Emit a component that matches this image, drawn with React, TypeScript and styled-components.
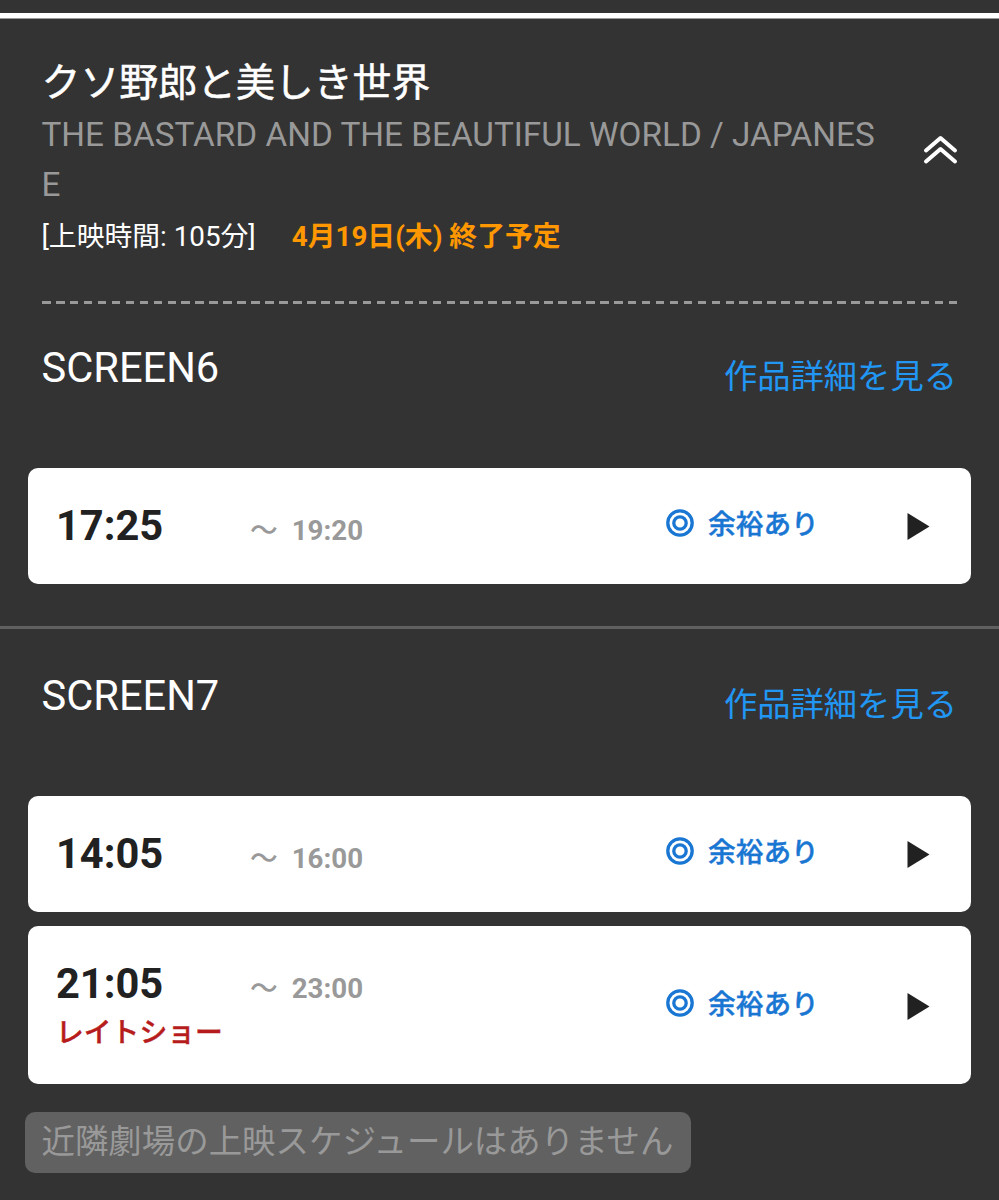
import React from "react";
import styled, { createGlobalStyle } from "styled-components";

const Global = createGlobalStyle`
  * { box-sizing: border-box; }
  body { margin: 0; background: #333; font-family: Roboto, "Noto Sans CJK JP", sans-serif; }
`;

const Page = styled.main`
  height: 1200px;
  overflow: hidden;
  background: #333;
  color: #fff;
`;
const TopRule = styled.div`
  height: 19px;
  border-top: 13px solid #333;
  border-bottom: 1px solid #999;
  background: #fff;
`;
const Header = styled.header`
  display: flex;
  margin: 0 41px;
  height: 285px;
  padding-top: 39px;
  background: repeating-linear-gradient(90deg, #999 0 8.6px, transparent 8.6px 13.95px) 0.5px 282px / 100% 3px no-repeat;
`;
const Info = styled.div`
  width: 860px;
  padding-left: 0.5px;
`;
const Title = styled.h1`
  margin: 0;
  font-size: 38.9px;
  font-weight: 400;
  -webkit-text-stroke: 0.5px currentColor;
  line-height: 50px;
  white-space: nowrap;
`;
const Subtitle = styled.div`
  width: 842px;
  padding-top: 2px;
  font-size: 33.3px;
  line-height: 50px;
  color: #999;
  word-break: break-all;
`;
const Meta = styled.div`
  display: flex;
  gap: 36px;
  padding-top: 2px;
  font-size: 27.8px;
  line-height: 50px;
  white-space: nowrap;
`;
const EndDate = styled.strong`
  color: #ff9800;
  font-weight: 700;
`;
const Collapse = styled.svg`
  flex: none;
  margin: 77px 0 0 22px;
`;
const Section = styled.section<{ $divided?: boolean }>`
  padding: ${(p) => (p.$divided ? "39px 28px 0" : "36px 28px 42px")};
  border-top: ${(p) => (p.$divided ? "3px solid #606060" : "none")};
`;
const SectionHead = styled.div`
  display: flex;
  justify-content: space-between;
  height: 128px;
  padding: 0 14px 0 13.5px;
`;
const Screen = styled.h2`
  margin: 0;
  font-size: 41.6px;
  font-weight: 400;
  line-height: 56px;
`;
const Detail = styled.a`
  padding-top: 9px;
  font-size: 33.3px;
  line-height: 56px;
  color: #2196f3;
`;
const Row = styled.div<{ $tall?: boolean }>`
  display: flex;
  height: ${(p) => (p.$tall ? 158 : 116)}px;
  margin-bottom: 14px;
  padding: 28px 41px 0 28px;
  border-radius: 10px;
  background: #fff;
  color: #212121;
  font-weight: 700;
  white-space: nowrap;
  &:last-child { margin-bottom: 0; }
`;
const Start = styled.div`
  width: 194px;
  font-size: 41.6px;
  line-height: 60px;
`;
const Late = styled.div`
  margin-top: -2px;
  font-size: 27.8px;
  font-weight: 500;
  -webkit-text-stroke: 0.4px currentColor;
  line-height: 42px;
  color: #b71c1c;
`;
const End = styled.div`
  display: flex;
  gap: 14px;
  width: 416px;
  padding-top: 5px;
  font-size: 27.7px;
  line-height: 60px;
  color: #999;
`;
const Tilde = styled.span`
  font-weight: 500;
`;
const Status = styled.div<{ $tall?: boolean }>`
  display: flex;
  gap: 14px;
  width: 241px;
  padding-top: ${(p) => (p.$tall ? 23 : 1)}px;
  font-size: 27.7px;
  font-weight: 500;
  line-height: 55px;
  color: #1976d2;
  svg { margin-top: 12px; }
  span { -webkit-text-stroke: 0.4px currentColor; }
`;
const Play = styled.svg<{ $tall?: boolean }>`
  margin-top: ${(p) => (p.$tall ? 39 : 17)}px;
  flex: none;
`;
const Notice = styled.div`
  width: 666px;
  height: 61px;
  margin: 28px 0 0 25px;
  padding-left: 16.5px;
  border-radius: 10px;
  background: #616161;
  color: #999;
  font-size: 33.45px;
  line-height: 60px;
  white-space: nowrap;
`;

type Show = { start: string; end: string; late?: boolean };

function ShowRow({ start, end, late }: Show) {
  return (
    <Row $tall={late}>
      <Start>
        {start}
        {late && <Late>レイトショー</Late>}
      </Start>
      <End><Tilde>〜</Tilde><span>{end}</span></End>
      <Status $tall={late}>
        <svg width="28" height="28" viewBox="0 0 28 28" fill="none" stroke="currentColor" strokeWidth="3.3">
          <circle cx="14" cy="14" r="12.2" />
          <circle cx="14" cy="14" r="6.2" />
        </svg>
        <span>余裕あり</span>
      </Status>
      <Play $tall={late} width="23" height="27" viewBox="0 0 23 27"><path d="M0.5 0L22.5 13.5L0.5 27Z" fill="#212121" /></Play>
    </Row>
  );
}

function ScreenSection({ name, shows, divided }: { name: string; shows: Show[]; divided?: boolean }) {
  return (
    <Section $divided={divided}>
      <SectionHead><Screen>{name}</Screen><Detail>作品詳細を見る</Detail></SectionHead>
      {shows.map((s) => <ShowRow key={s.start} {...s} />)}
    </Section>
  );
}

export default function App() {
  return (
    <Page>
      <Global />
      <TopRule />
      <Header>
        <Info>
          <Title>クソ野郎と美しき世界</Title>
          <Subtitle>THE BASTARD AND THE BEAUTIFUL WORLD / JAPANESE</Subtitle>
          <Meta><span>[上映時間: 105分]</span><EndDate>4月19日(木) 終了予定</EndDate></Meta>
        </Info>
        <Collapse width="35" height="30" viewBox="0 0 35 30" fill="none" stroke="#fff" strokeWidth="4" strokeLinecap="round" strokeLinejoin="round">
          <path d="M3 15.5L17.5 3L32 15.5M3 26.5L17.5 14L32 26.5" />
        </Collapse>
      </Header>
      <ScreenSection name="SCREEN6" shows={[{ start: "17:25", end: "19:20" }]} />
      <ScreenSection divided name="SCREEN7" shows={[{ start: "14:05", end: "16:00" }, { start: "21:05", end: "23:00", late: true }]} />
      <Notice>近隣劇場の上映スケジュールはありません</Notice>
    </Page>
  );
}
